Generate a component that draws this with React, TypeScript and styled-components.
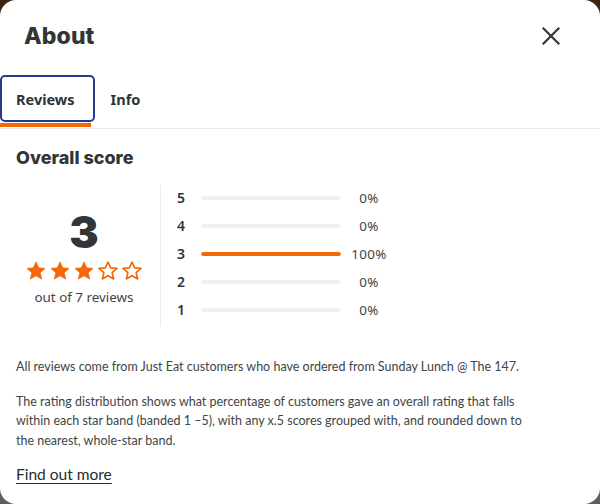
import React from 'react'
import styled, { createGlobalStyle } from 'styled-components'

const GlobalStyle = createGlobalStyle`
  html, body {
    margin: 0;
    padding: 0;
    height: 100%;
  }
  body {
    background: linear-gradient(180deg, #3b2412 0%, #4a3a2c 45%, #5e5e5e 100%);
    font-family: 'Noto Sans', 'Liberation Sans', sans-serif;
    color: #242e30;
  }
`

const Modal = styled.div`
  width: 600px;
  height: 504px;
  box-sizing: border-box;
  background: #ffffff;
  border-radius: 16px;
  overflow: hidden;
  display: flex;
  flex-direction: column;
`

const Header = styled.header`
  display: flex;
  align-items: center;
  justify-content: space-between;
  padding: 19px 38px 0 24px;
  height: 53px;
  box-sizing: border-box;
`

const Title = styled.h1`
  margin: 0;
  font-family: 'Inter', sans-serif;
  font-weight: 800;
  font-size: 23px;
  color: #333536;
  letter-spacing: 0.1px;
`

const CloseButton = styled.button`
  border: none;
  background: none;
  padding: 0;
  width: 22px;
  height: 22px;
  display: flex;
  align-items: center;
  justify-content: center;
  cursor: pointer;
`

const TabBar = styled.div`
  display: flex;
  margin-top: 22px;
  border-bottom: 1px solid #ececec;
`

const Tab = styled.button<{ $active?: boolean; $focused?: boolean }>`
  position: relative;
  border: 2px solid ${({ $focused }) => ($focused ? '#26398f' : 'transparent')};
  border-radius: 5px;
  background: none;
  height: 47px;
  padding: 0 ${({ $active }) => ($active ? '18px' : '10px')} 0 14px;
  font-family: 'Noto Sans', sans-serif;
  font-weight: 700;
  font-size: 14.5px;
  color: #2a3436;
  margin-bottom: 6px;

  &::after {
    content: '';
    display: ${({ $active }) => ($active ? 'block' : 'none')};
    position: absolute;
    left: -2px;
    right: 2px;
    bottom: -7px;
    height: 4px;
    background: #f36805;
  }
`

const Body = styled.main`
  padding: 0 16px;
`

const SectionTitle = styled.h2`
  margin: 18px 0 0;
  font-family: 'Inter', sans-serif;
  font-weight: 800;
  font-size: 18px;
  color: #333536;
`

const ScoreArea = styled.section`
  display: flex;
  margin-top: 17px;
  height: 141px;
`

const Summary = styled.div`
  width: 136px;
  padding-right: 8px;
  display: flex;
  flex-direction: column;
  align-items: center;
  justify-content: center;
  border-right: 1px solid #ececec;
`

const BigScore = styled.div`
  font-family: 'Inter', sans-serif;
  font-weight: 900;
  font-size: 44px;
  line-height: 44px;
  color: #333536;
  margin-top: 4px;
`

const Stars = styled.div`
  display: flex;
  gap: 4px;
  margin-top: 7px;
`

const Caption = styled.div`
  margin-top: 8px;
  font-size: 13.4px;
  color: #3e4546;
`

const Distribution = styled.div`
  display: flex;
  flex-direction: column;
  justify-content: center;
  gap: 8px;
  padding-left: 16px;
  margin-top: -4px;
`

const BarRow = styled.div`
  display: grid;
  grid-template-columns: 24px 140px 50px;
  align-items: center;
  height: 20px;
`

const BarLabel = styled.span`
  font-family: 'Noto Sans', sans-serif;
  font-weight: 600;
  font-size: 14px;
  color: #2f3536;
`

const Track = styled.div`
  height: 4px;
  border-radius: 2px;
  background: #f4f1ec;
  overflow: hidden;
`

const Fill = styled.div`
  height: 100%;
  border-radius: 2px;
  background: #f36805;
`

const Percent = styled.span`
  text-align: center;
  font-family: 'Noto Sans', sans-serif;
  font-size: 13.4px;
  letter-spacing: 0.3px;
  color: #3e4546;
  padding-left: 6px;
`

const Notes = styled.div`
  margin-top: 31px;
  max-width: 510px;
`

const Paragraph = styled.p`
  margin: 0;
  font-family: 'Lato', 'Noto Sans', sans-serif;
  font-size: 12.5px;
  line-height: 19.5px;
  color: #3e4546;

  & + & {
    margin-top: 15px;
  }
`

const Link = styled.a`
  display: inline-block;
  margin-top: 15px;
  font-family: 'Lato', 'Noto Sans', sans-serif;
  font-size: 15.5px;
  color: #242e30;
  text-decoration: underline;
  text-underline-offset: 3px;
`

function Star({ filled }: { filled: boolean }) {
  return (
    <svg width="20" height="19" viewBox="0 0 24 23">
      <path
        d="M12 1.2l3.2 7.1 7.7.7-5.9 5.1 1.8 7.6L12 17.8l-6.8 3.9 1.8-7.6-5.9-5.1 7.7-.7z"
        fill={filled ? '#f36805' : '#ffffff'}
        stroke="#f36805"
        strokeWidth={filled ? 1 : 2}
        strokeLinejoin="round"
      />
    </svg>
  )
}

const bands = [
  { star: 5, pct: 0 },
  { star: 4, pct: 0 },
  { star: 3, pct: 100 },
  { star: 2, pct: 0 },
  { star: 1, pct: 0 }
]

export default function App() {
  return (
    <>
      <GlobalStyle />
      <Modal>
        <Header>
          <Title>About</Title>
          <CloseButton aria-label="Close">
            <svg width="18" height="18" viewBox="0 0 18 18">
              <path d="M1.5 1.5l15 15M16.5 1.5l-15 15" stroke="#333536" strokeWidth="2.2" strokeLinecap="square" />
            </svg>
          </CloseButton>
        </Header>
        <TabBar>
          <Tab $active $focused>Reviews</Tab>
          <Tab>Info</Tab>
        </TabBar>
        <Body>
          <SectionTitle>Overall score</SectionTitle>
          <ScoreArea>
            <Summary>
              <BigScore>3</BigScore>
              <Stars>
                {[1, 2, 3, 4, 5].map(n => (
                  <Star key={n} filled={n <= 3} />
                ))}
              </Stars>
              <Caption>out of 7 reviews</Caption>
            </Summary>
            <Distribution>
              {bands.map(b => (
                <BarRow key={b.star}>
                  <BarLabel>{b.star}</BarLabel>
                  <Track>
                    <Fill style={{ width: `${b.pct}%` }} />
                  </Track>
                  <Percent>{b.pct}%</Percent>
                </BarRow>
              ))}
            </Distribution>
          </ScoreArea>
          <Notes>
            <Paragraph>All reviews come from Just Eat customers who have ordered from Sunday Lunch @ The 147.</Paragraph>
            <Paragraph>
              The rating distribution shows what percentage of customers gave an overall rating that falls within each
              star band (banded 1 –5), with any x.5 scores grouped with, and rounded down to the nearest, whole-star
              band.
            </Paragraph>
          </Notes>
          <Link href="#">Find out more</Link>
        </Body>
      </Modal>
    </>
  )
}
